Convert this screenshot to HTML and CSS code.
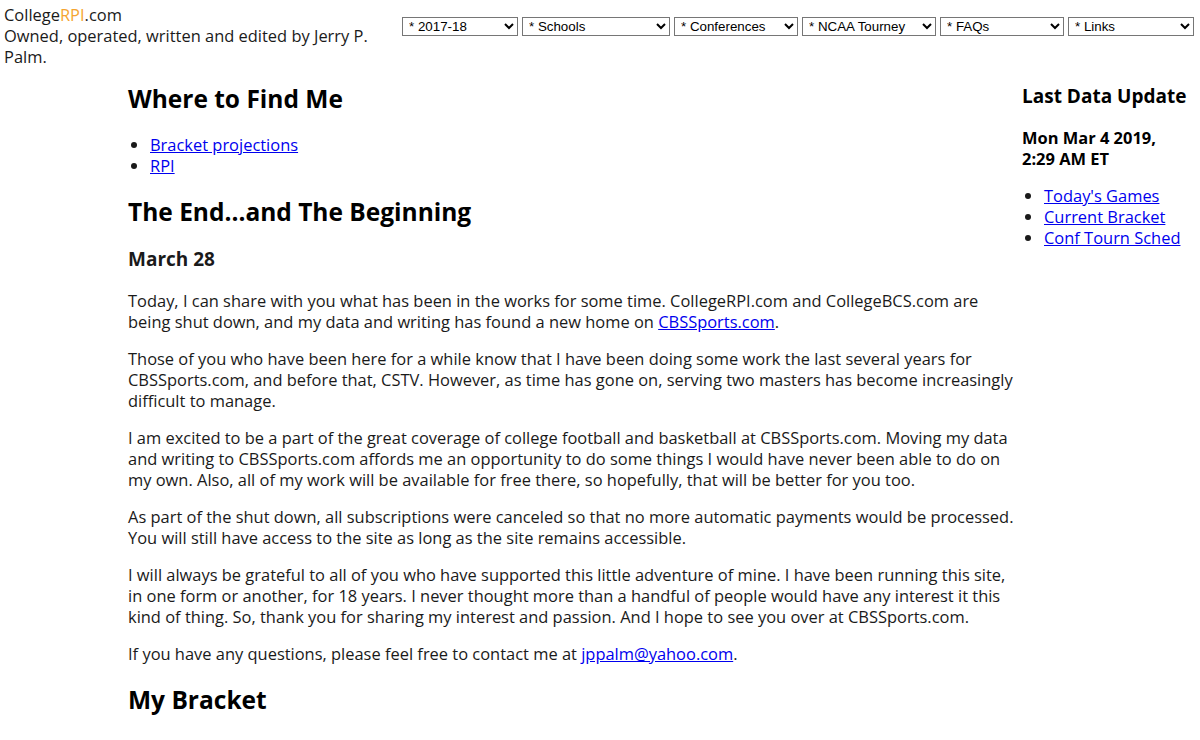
FILE: index.html
```html
<!DOCTYPE html>
<html>
<head>
<meta charset="utf-8">
<title>CollegeRPI.com</title>
<link rel="stylesheet" href="styles.css">
</head>
<body>
<header class="top">
  <div class="brand">
    <div>College<span class="rpi">RPI</span>.com</div>
    <div>Owned, operated, written and edited by Jerry P. Palm.</div>
  </div>
  <nav class="menus">
    <select class="sel sel-season"><option>* 2017-18</option></select>
    <select class="sel sel-schools"><option>* Schools</option></select>
    <select class="sel sel-conf"><option>* Conferences</option></select>
    <select class="sel sel-ncaa"><option>* NCAA Tourney</option></select>
    <select class="sel sel-faq"><option>* FAQs</option></select>
    <select class="sel sel-links"><option>* Links</option></select>
  </nav>
</header>
<div class="layout">
  <div class="leftcol"></div>
  <main class="main">
    <h2 class="first">Where to Find Me</h2>
    <ul class="list">
      <li><a href="#">Bracket projections</a></li>
      <li><a href="#">RPI</a></li>
    </ul>
    <h2>The End...and The Beginning</h2>
    <h3>March 28</h3>
    <p>Today, I can share with you what has been in the works for some time. CollegeRPI.com and CollegeBCS.com are being shut down, and my data and writing has found a new home on <a href="#">CBSSports.com</a>.</p>
    <p>Those of you who have been here for a while know that I have been doing some work the last several years for CBSSports.com, and before that, CSTV. However, as time has gone on, serving two masters has become increasingly difficult to manage.</p>
    <p>I am excited to be a part of the great coverage of college football and basketball at CBSSports.com. Moving my data and writing to CBSSports.com affords me an opportunity to do some things I would have never been able to do on my own. Also, all of my work will be available for free there, so hopefully, that will be better for you too.</p>
    <p>As part of the shut down, all subscriptions were canceled so that no more automatic payments would be processed. You will still have access to the site as long as the site remains accessible.</p>
    <p>I will always be grateful to all of you who have supported this little adventure of mine. I have been running this site, in one form or another, for 18 years. I never thought more than a handful of people would have any interest it this kind of thing. So, thank you for sharing my interest and passion. And I hope to see you over at CBSSports.com.</p>
    <p>If you have any questions, please feel free to contact me at <a href="#">jppalm@yahoo.com</a>.</p>
    <h2>My Bracket</h2>
    <p>&nbsp;</p>
  </main>
  <aside class="side">
    <h3 class="first">Last Data Update</h3>
    <p class="stamp">Mon Mar 4 2019, 2:29 AM ET</p>
    <ul class="list">
      <li><a href="#">Today's Games</a></li>
      <li><a href="#">Current Bracket</a></li>
      <li><a href="#">Conf Tourn Sched</a></li>
    </ul>
  </aside>
</div>
</body>
</html>
```
FILE: styles.css
```css
html, body {
  margin: 0;
  padding: 0;
  background: #fff;
}
body {
  font-family: "Open Sans", "Noto Sans", sans-serif;
  font-size: 16.45px;
  line-height: 21px;
  color: #1a1a1a;
}
a {
  color: #0000ee;
}
.top {
  display: flex;
  align-items: flex-start;
  padding: 4px 6px 0 4px;
}
.brand {
  width: 398px;
  flex: none;
}
.rpi {
  color: #f5a431;
}
.menus {
  display: flex;
  gap: 4px;
  margin-top: 13px;
}
.sel {
  font-family: "Liberation Sans", Arial, sans-serif;
  font-size: 13.33px;
  height: 19px;
  padding: 0 0 0 2px;
  border: 1px solid #767676;
  border-radius: 0;
  background: #fff;
  color: #000;
}
.sel-season { width: 116px; }
.sel-schools { width: 148px; }
.sel-conf { width: 124px; }
.sel-ncaa { width: 134px; }
.sel-faq { width: 124px; }
.sel-links { width: 126px; }

.layout {
  display: grid;
  grid-template-columns: 128px 890px 182px;
}
.main h2, .side h3 { color: #000; }
h2 {
  font-size: 24.5px;
  line-height: 32px;
  margin: 20px 0 19px;
}
h2.first {
  margin-top: 16px;
}
h3 {
  font-size: 19px;
  line-height: 25px;
  margin: 18px 0;
}
.side h3.first {
  margin-top: 17px;
  margin-bottom: 16px;
}
p {
  margin: 16px 0;
}
.list {
  margin: 16px 0;
  padding-left: 22px;
}
.stamp {
  font-weight: bold;
  color: #000;
  margin: 18px 0 16px;
}
.side {
  padding: 0 10px 0 4px;
}
```
